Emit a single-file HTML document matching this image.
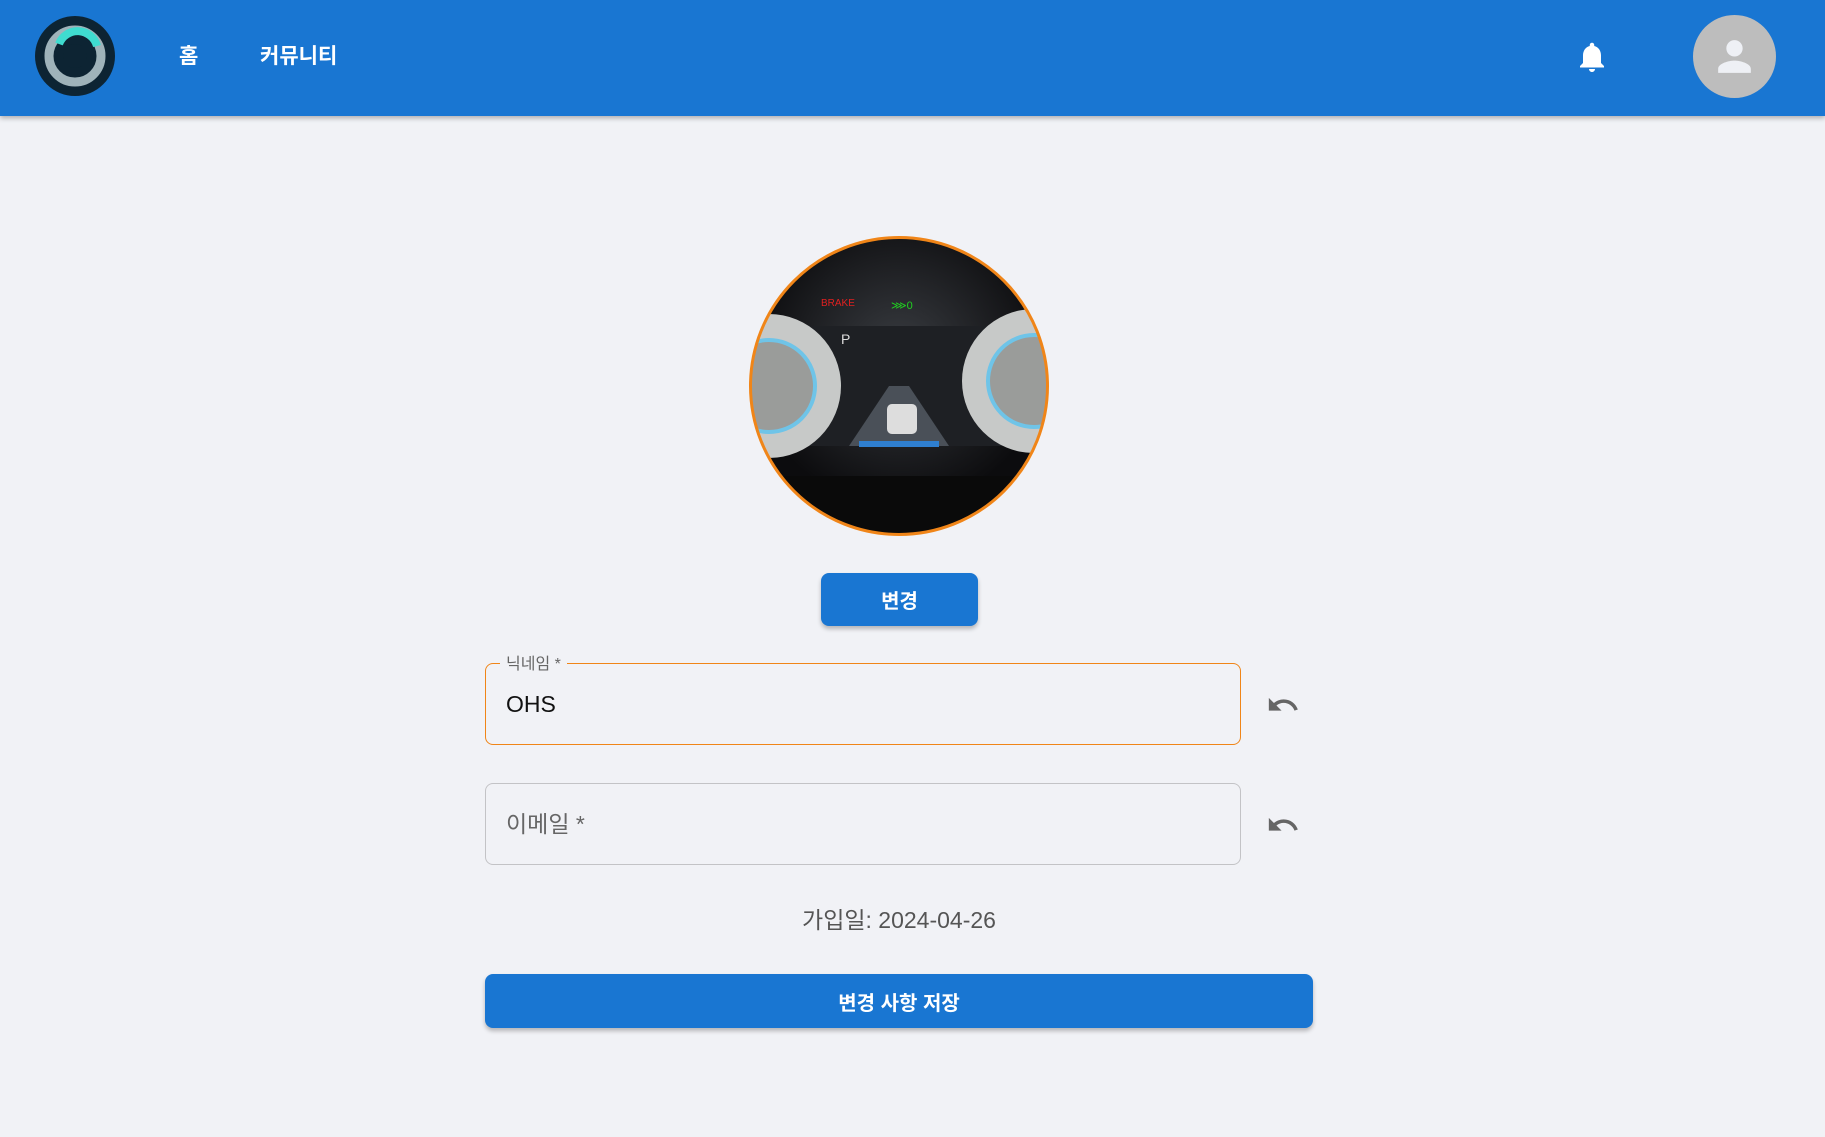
<!DOCTYPE html>
<html><head><meta charset="utf-8"><style>
*{margin:0;padding:0;box-sizing:border-box}
body{width:1825px;height:1137px;background:#f1f2f6;font-family:"Liberation Sans","Noto Sans CJK KR",sans-serif;position:relative;overflow:hidden}
.hdr{position:absolute;left:0;top:0;width:1825px;height:116px;background:#1976d2;box-shadow:0 2px 5px rgba(0,0,0,.3)}
.nav{position:absolute;top:40px;color:#fff;font-size:21px;font-weight:bold}
.btn{position:absolute;background:#1976d2;color:#fff;font-weight:bold;border-radius:8px;box-shadow:0 3px 4px rgba(0,0,0,.25);display:flex;align-items:center;justify-content:center}
.field{position:absolute;left:485px;width:756px;height:82px;border-radius:8px}
</style></head><body>
<div class="hdr">
<svg style="position:absolute;left:35px;top:16px" width="80" height="80" viewBox="0 0 80 80">
<circle cx="40" cy="40" r="40" fill="#0d2433"/>
<circle cx="40" cy="40" r="26" fill="none" stroke="#9fb3ba" stroke-width="9"/>
<path d="M24 28 A20 20 0 0 1 62 30" fill="none" stroke="#3fdcd0" stroke-width="8"/>
<circle cx="40" cy="40" r="12" fill="#0d2433"/>
</svg>
<div class="nav" style="left:179px">홈</div>
<div class="nav" style="left:260px">커뮤니티</div>
<svg style="position:absolute;left:1574px;top:38px" width="36" height="38" viewBox="0 0 24 24"><path fill="#fff" d="M12 22c1.1 0 2-.9 2-2h-4c0 1.1.9 2 2 2zm6-6v-5c0-3.07-1.63-5.64-4.5-6.32V4c0-.83-.67-1.5-1.5-1.5s-1.5.67-1.5 1.5v.68C7.64 5.36 6 7.92 6 11v5l-2 2v1h16v-1l-2-2z"/></svg>
<div style="position:absolute;left:1693px;top:15px;width:83px;height:83px;border-radius:50%;background:#bdbdbd;overflow:hidden">
<svg style="position:absolute;left:17px;top:17px" width="49" height="49" viewBox="0 0 24 24"><path fill="#eef0f5" d="M12 12c2.21 0 4-1.79 4-4s-1.79-4-4-4-4 1.79-4 4 1.79 4 4 4zm0 2c-2.67 0-8 1.34-8 4v2h16v-2c0-2.66-5.33-4-8-4z"/></svg></div>
</div>
<svg style="position:absolute;left:749px;top:236px" width="300" height="300" viewBox="0 0 300 300">
<defs><clipPath id="c"><circle cx="150" cy="150" r="148"/></clipPath>
<radialGradient id="g" cx="50%" cy="40%"><stop offset="0" stop-color="#3a3d42"/><stop offset="1" stop-color="#0c0c0e"/></radialGradient></defs>
<g clip-path="url(#c)">
<rect width="300" height="300" fill="url(#g)"/>
<rect x="0" y="90" width="300" height="120" fill="#1e2024"/>
<path d="M100 210 L140 150 L160 150 L200 210Z" fill="#4a5058"/>
<circle cx="20" cy="150" r="72" fill="#c7c9c8"/><circle cx="20" cy="150" r="46" fill="#9a9c9a" stroke="#6fc4e8" stroke-width="4"/>
<circle cx="285" cy="145" r="72" fill="#c7c9c8"/><circle cx="285" cy="145" r="46" fill="#9a9c9a" stroke="#6fc4e8" stroke-width="4"/>
<rect x="138" y="168" width="30" height="30" rx="5" fill="#ddd"/>
<rect x="110" y="205" width="80" height="6" fill="#2f7fd0"/>
<text x="72" y="70" fill="#e02020" font-size="10" font-family="Liberation Sans">BRAKE</text>
<text x="142" y="73" fill="#20d020" font-size="11" font-family="Liberation Sans">⋙0</text>
<text x="92" y="108" fill="#ddd" font-size="14" font-family="Liberation Sans">P</text>
<rect x="0" y="240" width="300" height="60" fill="#0a0a0a"/>
</g>
<circle cx="150" cy="150" r="148.5" fill="none" stroke="#f08518" stroke-width="3"/>
</svg>
<div class="btn" style="left:821px;top:573px;width:157px;height:53px;font-size:20px">변경</div>
<div class="field" style="top:663px;border:1.5px solid #f08518"></div>
<div style="position:absolute;left:500px;top:650px;background:#f1f2f6;padding:0 6px;color:#666;font-size:16px">닉네임 *</div>
<div style="position:absolute;left:506px;top:691px;font-size:23px;color:#111">OHS</div>
<div class="field" style="top:783px;border:1.5px solid #c3c3c6"></div>
<div style="position:absolute;left:506px;top:805px;font-size:23px;color:#666">이메일 *</div>
<svg style="position:absolute;left:1266px;top:688px" width="34" height="34" viewBox="0 0 24 24"><path fill="#666" d="M12.5 8c-2.65 0-5.05.99-6.9 2.6L2 7v9h9l-3.62-3.62c1.39-1.16 3.160-1.880 5.12-1.88 3.54 0 6.55 2.31 7.6 5.5l2.37-.78C21.08 11.03 17.15 8 12.5 8z"/></svg>
<svg style="position:absolute;left:1266px;top:808px" width="34" height="34" viewBox="0 0 24 24"><path fill="#666" d="M12.5 8c-2.65 0-5.05.99-6.9 2.6L2 7v9h9l-3.62-3.62c1.39-1.16 3.16-1.88 5.12-1.88 3.54 0 6.550 2.31 7.6 5.5l2.37-.78C21.08 11.03 17.15 8 12.5 8z"/></svg>
<div style="position:absolute;left:0;width:1798px;top:901px;text-align:center;font-size:23px;color:#555">가입일: 2024-04-26</div>
<div class="btn" style="left:485px;top:974px;width:828px;height:54px;font-size:20px">변경 사항 저장</div>
</body></html>
